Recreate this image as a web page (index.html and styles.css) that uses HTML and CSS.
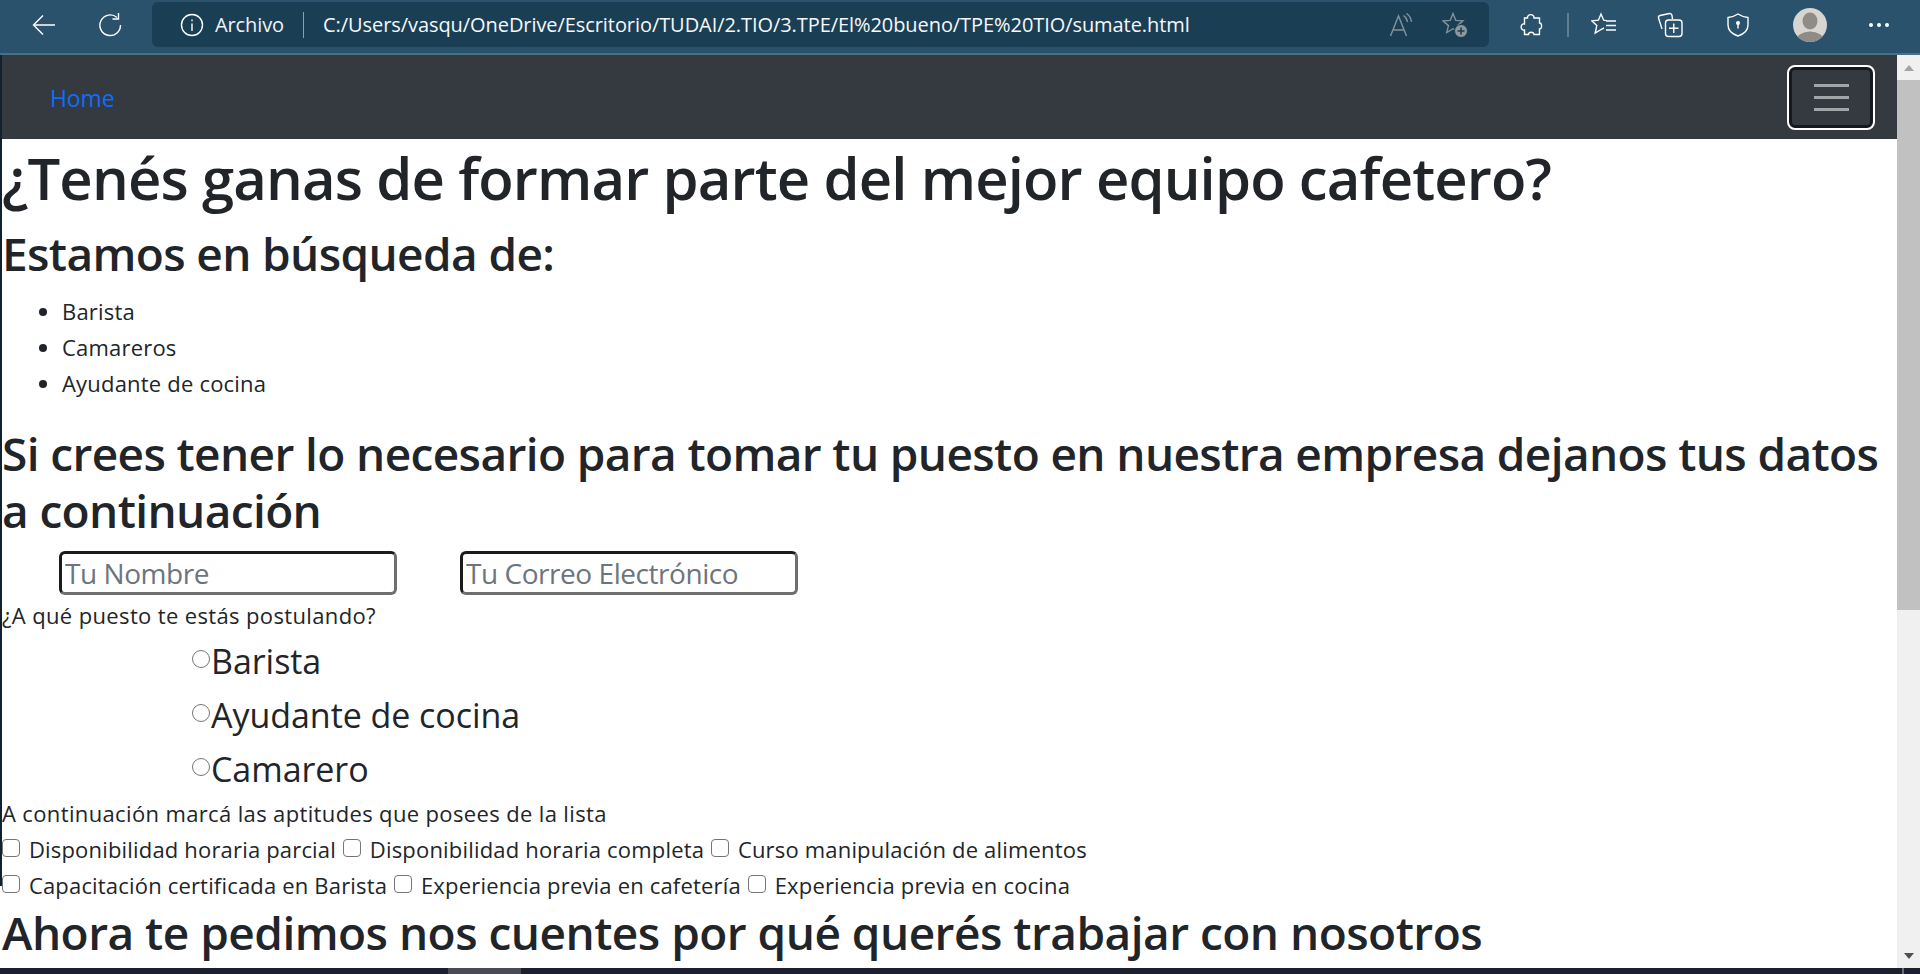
FILE: index.html
```html
<!DOCTYPE html>
<html lang="es">
<head>
<meta charset="utf-8">
<title>Sumate</title>
<link rel="stylesheet" href="styles.css">
</head>
<body>
<div class="app">
  <header class="toolbar">
    <button class="tool back" aria-label="Atrás"><svg viewBox="0 0 24 24" width="24" height="24"><path d="M23 12H1.500M11 2.500 1.500 12 11 21.500"/></svg></button>
    <button class="tool reload" aria-label="Recargar"><svg viewBox="0 0 24 24" width="24" height="24"><path d="M19 4.500A10.300 10.300 0 1 0 22.500 12M20.500 0v6H14.500"/></svg></button>
    <div class="address">
      <svg class="info" viewBox="0 0 24 24" width="24" height="24"><circle cx="12" cy="12" r="10.500"/><path d="M12 10.500V18M12 6.500v1.800"/></svg>
      <span class="scheme">Archivo</span>
      <span class="divider"></span>
      <span class="url">C:/Users/vasqu/OneDrive/Escritorio/TUDAI/2.TIO/3.TPE/El%20bueno/TPE%20TIO/sumate.html</span>
      <span class="address-end">
        <svg class="dim" viewBox="0 0 24 24" width="24" height="24"><path d="M1.500 23 9.500 3l8 20M4.500 17h10M14.500 2.500c2.500 1.500 3.500 3.500 4 6.500M17.500.5c3 2 4.500 4.500 5 8.500"/></svg>
        <svg class="dim star-add" viewBox="0 0 26 26" width="26" height="26"><path d="M11 1.500l2.800 6.900 7.200.5-5.500 4.700 1.800 7-6.300-3.900-6.300 3.900 1.800-7L1 8.900l7.200-.5z"/><circle class="badge" cx="19" cy="19" r="6.500"/><path class="plus" d="M19 15.500v7M15.500 19h7"/></svg>
      </span>
    </div>
    <div class="tools-right">
      <svg class="ext" viewBox="0 0 24 24" width="24" height="24"><path d="M8.500 5c-.5-4.500 7-4.500 6.500 0h5.500v5c2.800-.5 2.800 6.500 0 6v5.500H15c.3-3-6-3-5.500 0H5.500V17c-4.500 1-4.500-7 0-6V5z"/></svg>
      <span class="sep"></span>
      <svg class="favs" viewBox="0 0 26 26" width="26" height="26"><path d="M16 8.600l-3.300-.4L10 2 7.400 8.200 1 8.900l4.800 4.500L4.200 21l5.800-3.500 3-1.500M15 9H25M15 13.500H25M15 18H25"/></svg>
      <svg class="coll" viewBox="0 0 26 26" width="26" height="26"><path d="M5 17 1.500 6q-.3-2 1.500-2.500l9.500-2q2-.3 2.500 2L15.500 7"/><rect x="8.500" y="8" width="16.500" height="16.500" rx="3"/><path d="M16.750 11.500v9.500M12 16.250h9.500"/></svg>
      <svg class="shield" viewBox="0 0 24 24" width="24" height="24"><path d="M12 1c3 2 6 3 10 3.500V12c0 5.500-4 9-10 11C6 21 2 17.500 2 12V4.500C6 4 9 3 12 1z"/><circle class="key" cx="12" cy="10" r="2"/><path d="M12 10v5.500"/></svg>
      <span class="avatar"><svg viewBox="0 0 34 34" width="34" height="34"><ellipse cx="17" cy="13" rx="7.500" ry="8.500"/><ellipse cx="17" cy="33" rx="14" ry="9.500"/></svg></span>
      <span class="dots"><i></i><i></i><i></i></span>
    </div>
  </header>
  <div class="viewport">
    <main class="page">
      <nav class="navbar">
        <a class="home" href="#">Home</a>
        <button class="burger" aria-label="Menú"><span></span><span></span><span></span></button>
      </nav>
      <h1>¿Tenés ganas de formar parte del mejor equipo cafetero?</h1>
      <h2>Estamos en búsqueda de:</h2>
      <ul>
        <li>Barista</li>
        <li>Camareros</li>
        <li>Ayudante de cocina</li>
      </ul>
      <h3>Si crees tener lo necesario para tomar tu puesto en nuestra empresa dejanos tus datos a continuación</h3>
      <form class="form">
        <div class="fields">
          <input class="field" type="text" placeholder="Tu Nombre">
          <input class="field" type="email" placeholder="Tu Correo Electrónico">
        </div>
        <p class="line">¿A qué puesto te estás postulando?</p>
        <div class="radios">
          <label class="radio"><input type="radio" name="puesto">Barista</label>
          <label class="radio"><input type="radio" name="puesto">Ayudante de cocina</label>
          <label class="radio"><input type="radio" name="puesto">Camarero</label>
        </div>
        <p class="line">A continuación marcá las aptitudes que posees de la lista</p>
        <div class="line checks">
          <label><input type="checkbox"> Disponibilidad horaria parcial</label>
          <label><input type="checkbox"> Disponibilidad horaria completa</label>
          <label><input type="checkbox"> Curso manipulación de alimentos</label>
        </div>
        <div class="line checks">
          <label><input type="checkbox"> Capacitación certificada en Barista</label>
          <label><input type="checkbox"> Experiencia previa en cafetería</label>
          <label><input type="checkbox"> Experiencia previa en cocina</label>
        </div>
        <h3 class="last">Ahora te pedimos nos cuentes por qué querés trabajar con nosotros</h3>
      </form>
    </main>
    <aside class="scrollbar">
      <span class="arrow up"></span>
      <span class="thumb"></span>
      <span class="track"></span>
      <span class="arrow down"></span>
    </aside>
  </div>
  <footer class="taskbar"><span class="task-active"></span><span class="task-thin"></span></footer>
</div>
</body>
</html>
```
FILE: styles.css
```css
* { box-sizing: border-box; }
html, body { margin: 0; height: 100%; overflow: hidden; }
body { font-family: "Open Sans", "Noto Sans", sans-serif; color: #212529; background: #fff; }
.app { height: 974px; display: flex; flex-direction: column; }

.toolbar {
  height: 55px; flex: none; display: flex; align-items: center;
  background: #2a526c; border-bottom: 2px solid #4a7088; padding: 0 0 4px 32px;
}
.toolbar svg { fill: none; stroke: #fff; stroke-width: 1.4; flex: none; }
.tool { background: none; border: 0; padding: 0; width: 24px; height: 24px; display: block; }
.reload { margin-left: 42px; }
.address {
  margin-left: 30px; width: 1337px; height: 45px; background: #1a3f55; border-radius: 6px; flex: none;
  display: flex; align-items: center; padding-left: 28px; color: #fff; font-size: 20px;
}
.scheme { margin-left: 11px; letter-spacing: -.1px; color: #f0f4f6; }
.divider { width: 1px; height: 26px; background: #8aa0ae; margin: 0 19px 0 19px; }
.url { letter-spacing: -.07px; white-space: nowrap; color: #f6f8fa; }
.address-end { margin-left: auto; display: flex; align-items: center; gap: 29px; padding-right: 21px; }
.toolbar .dim { stroke: #85929b; }
.toolbar .star-add .badge { fill: #8d979d; stroke: #1a3f55; stroke-width: 1; }
.toolbar .star-add .plus { stroke: #1a3f55; stroke-width: 1.6; }
.tools-right { display: flex; align-items: center; flex: 1; padding-left: 30px; }
.sep { width: 2px; height: 24px; background: #5c7d92; margin: 0 22px 0 24px; }
.coll { margin-left: 40px; }
.shield { margin-left: 43px; }
.toolbar .shield .key { fill: #fff; stroke: none; }
.avatar { margin-left: 43px; width: 34px; height: 34px; border-radius: 50%; background: #d7d5d1; overflow: hidden; display: flex; justify-content: center; }
.toolbar .avatar svg { fill: #8f8c87; stroke: none; }
.dots { margin-left: 42px; display: flex; gap: 4px; }
.dots i { width: 4px; height: 4px; border-radius: 50%; background: #fff; }

.viewport { flex: 1; min-height: 0; display: flex; }
.page { flex: 1; min-width: 0; overflow: hidden; position: relative; padding-left: 2px; }
.page::before { content: ""; position: absolute; left: 0; top: 0; width: 2px; height: 831px; background: #10222f; }
.navbar {
  height: 84px; margin-left: -2px; background: #343a40; display: flex; align-items: center; justify-content: space-between;
  padding: 0 24px 0 50px;
}
.home { color: #0d6efd; font-size: 23px; text-decoration: none; letter-spacing: -.1px; margin-top: 1px; }
.burger {
  width: 84px; height: 61px; background: #343a40; border: 3px solid #16181b; border-radius: 6px; outline: 2px solid #fff;
  display: flex; flex-direction: column; justify-content: center; align-items: center; gap: 9px; padding: 0;
}
.burger span { width: 35px; height: 3px; background: #a2a5a7; }

h1, h2, h3 { margin: 0; font-weight: 600; color: #212529; }
h1 { font-size: 58px; line-height: 70px; letter-spacing: -.88px; margin-top: 4px; }
h2 { font-size: 46px; line-height: 56px; letter-spacing: -.62px; margin-top: 12px; }
h3 { font-size: 46px; line-height: 57px; letter-spacing: -.62px; margin-bottom: 7px; }
ul { margin: 0 0 24px; padding: 12px 0 0 60px; font-size: 22px; line-height: 36px; letter-spacing: .2px; }
.fields { display: flex; gap: 63px; padding: 5px 0 0 57px; height: 51px; }
.field {
  width: 338px; height: 44px; font: 28px "Open Sans", sans-serif; letter-spacing: -.45px; padding: 0 3px;
  border: 3px solid; border-color: #1b1b1b #6f6f6f #6f6f6f #1b1b1b; border-radius: 6px; background: #fff; outline: none;
}
.field::placeholder { color: #6c757d; opacity: 1; }
.line { margin: 0; font-size: 22px; line-height: 36px; letter-spacing: .36px; white-space: nowrap; }
.radios { padding: 1px 0 0 190px; margin-bottom: -1px; display: flex; flex-direction: column; }
.radio { display: flex; align-items: center; height: 54px; font-size: 34px; letter-spacing: -.05px; }
.radio input { appearance: none; margin: -4px 1px 0 0; width: 18px; height: 18px; border: 1px solid #767676; border-radius: 50%; background: #fff; }
.line.checks { letter-spacing: .18px; }
.checks label { margin-right: 1px; }
.checks input { appearance: none; margin: 0 3px 9px 0; width: 18px; height: 18px; border: 1.5px solid #767676; border-radius: 4px; background: #fff; vertical-align: middle; }
h3.last { white-space: nowrap; margin: 0; letter-spacing: -.52px; line-height: 58px; }

.scrollbar { width: 23px; flex: none; background: #f0f0f0; display: flex; flex-direction: column; align-items: center; }
.arrow { width: 23px; height: 25px; flex: none; display: flex; justify-content: center; align-items: center; }
.arrow::after { content: ""; border-left: 5px solid transparent; border-right: 5px solid transparent; }
.up::after { border-bottom: 6px solid #a3a3a3; }
.down::after { border-top: 6px solid #505050; }
.thumb { width: 23px; height: 530px; flex: none; background: #c1c1c1; }
.track { flex: 1; }
.taskbar { height: 6px; flex: none; background: #1c1f2e; display: flex; padding-left: 448px; }
.task-active { width: 73px; background: #4a4a56; }
.task-thin { width: 2px; margin-left: 1381px; background: #6b6b75; }
```
